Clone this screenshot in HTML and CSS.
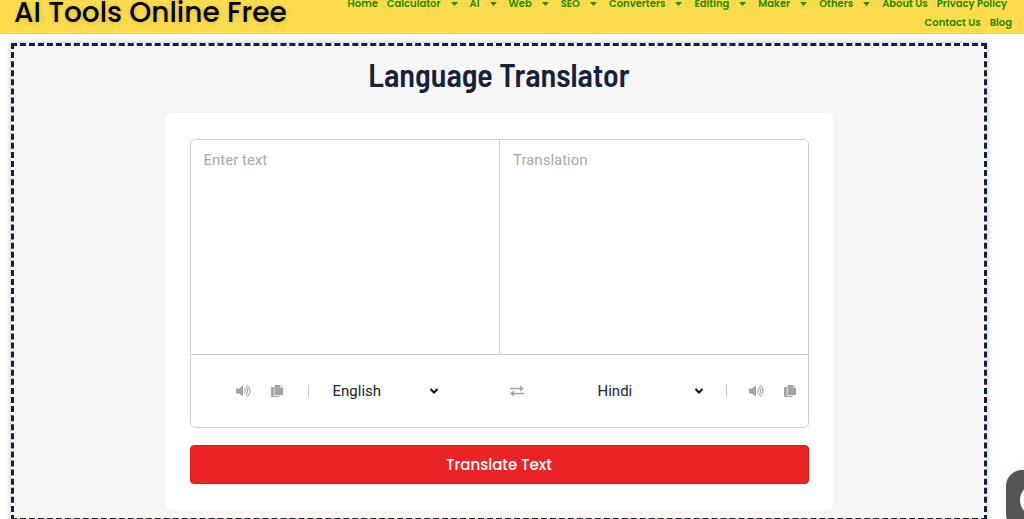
FILE: index.html
```html
<!DOCTYPE html>
<html lang="en">
<head>
<meta charset="utf-8">
<meta name="viewport" content="width=device-width, initial-scale=1">
<title>Language Translator</title>
<link rel="stylesheet" href="styles.css">
</head>
<body>
<svg class="sprite" aria-hidden="true">
  <symbol id="speaker" viewBox="0 0 15 14">
    <path fill="currentColor" d="M0 4.500h3L7 1.500v11L3 9.500H0z"/>
    <path fill="none" stroke="currentColor" stroke-width="1.100" stroke-linecap="round" d="M8.500 5.200q1.700 1.800 0 3.600M10 3.200q3.400 3.800 0 7.600M11.500 1.500q5 5.500 0 11"/>
  </symbol>
  <symbol id="copy" viewBox="0 0 13 14">
    <path fill="currentColor" d="M3.500 1H9v3h3v6.500a.5.5 0 0 1-.5.5H4a.5.5 0 0 1-.5-.5zM9.600 1L12 3.400H9.600zM0 3h2.800v8q0 .8.800.8H9V12q0 1-1 1H1q-1 0-1-1z"/>
  </symbol>
  <symbol id="swap" viewBox="0 0 16 14">
    <path fill="none" stroke="currentColor" stroke-width="1.600" d="M0 4.500h12M14 9.500H2"/>
    <path fill="currentColor" d="M10 1.500l4 3-4 3zM4 6.500l-4 3 4 3z"/>
  </symbol>
  <symbol id="chevron" viewBox="0 0 10 8">
    <path fill="none" stroke="currentColor" stroke-width="2" d="M1.500 2L5 5.500 8.500 2"/>
  </symbol>
  <symbol id="caret" viewBox="0 0 7 4">
    <path fill="currentColor" d="M0 0h7L3.500 4z"/>
  </symbol>
</svg>

<header class="site-header">
  <a class="brand" href="#">AI Tools Online Free</a>
  <nav class="nav">
    <div class="nav-row nav-main">
      <a href="#">Home</a>
      <a href="#">Calculator <svg class="caret"><use href="#caret"/></svg></a>
      <a href="#">AI <svg class="caret"><use href="#caret"/></svg></a>
      <a href="#">Web <svg class="caret"><use href="#caret"/></svg></a>
      <a href="#">SEO <svg class="caret"><use href="#caret"/></svg></a>
      <a href="#">Converters <svg class="caret"><use href="#caret"/></svg></a>
      <a href="#">Editing <svg class="caret"><use href="#caret"/></svg></a>
      <a href="#">Maker <svg class="caret"><use href="#caret"/></svg></a>
      <a href="#">Others <svg class="caret"><use href="#caret"/></svg></a>
      <a href="#">About Us</a>
      <a href="#">Privacy Policy</a>
    </div>
    <div class="nav-row">
      <a href="#">Contact Us</a>
      <a href="#">Blog</a>
    </div>
  </nav>
</header>

<main class="panel">
  <h1 class="title">Language Translator</h1>
  <form class="card">
    <div class="translator">
      <div class="texts">
        <textarea class="text" placeholder="Enter text" aria-label="Enter text"></textarea>
        <textarea class="text" placeholder="Translation" aria-label="Translation" readonly></textarea>
      </div>
      <div class="controls">
        <div class="group from">
          <div class="icons">
            <button class="icon" type="button" aria-label="Listen to text"><svg width="15" height="14"><use href="#speaker"/></svg></button>
            <button class="icon" type="button" aria-label="Copy text"><svg width="13" height="14"><use href="#copy"/></svg></button>
          </div>
          <span class="rule"></span>
          <div class="picker">
            <select aria-label="From language"><option>English</option><option>Hindi</option></select>
            <svg class="chevron"><use href="#chevron"/></svg>
          </div>
        </div>
        <button class="icon" type="button" aria-label="Swap languages"><svg width="16" height="14"><use href="#swap"/></svg></button>
        <div class="group to">
          <div class="picker">
            <select aria-label="To language"><option>Hindi</option><option>English</option></select>
            <svg class="chevron"><use href="#chevron"/></svg>
          </div>
          <span class="rule"></span>
          <div class="icons">
            <button class="icon" type="button" aria-label="Listen to translation"><svg width="15" height="14"><use href="#speaker"/></svg></button>
            <button class="icon" type="button" aria-label="Copy translation"><svg width="13" height="14"><use href="#copy"/></svg></button>
          </div>
        </div>
      </div>
    </div>
    <button class="submit" type="button">Translate Text</button>
  </form>
</main>

<button class="chat" type="button" aria-label="Open chat"><span class="chat-dot"></span></button>
</body>
</html>
```
FILE: styles.css
```css
* {
  box-sizing: border-box;
}

body {
  margin: 0;
  overflow: hidden;
  background: #fff;
  font-family: Poppins, Inter, sans-serif;
}

button {
  padding: 0;
  border: 0;
  cursor: pointer;
}

.sprite {
  position: absolute;
  width: 0;
  height: 0;
}

/* Header */
.site-header {
  display: flex;
  justify-content: space-between;
  align-items: center;
  margin-top: -12px;
  padding: 6px 12px 1px 14px;
  border-bottom: 1px solid #f5cd43;
  background: #fcdc4d;
}

.brand {
  color: #000;
  font-size: 28px;
  font-weight: 500;
  line-height: 36px;
  text-decoration: none;
  text-shadow: 1px 1px 5px rgb(0 0 0 / 15%);
  white-space: nowrap;
}

.nav-row {
  display: flex;
  justify-content: flex-end;
  gap: 9px;
}

.nav-main {
  margin-right: 5px;
}

.nav a {
  display: flex;
  align-items: center;
  gap: 10px;
  color: #1f8a05;
  font-size: 10px;
  font-weight: 600;
  line-height: 19px;
  text-decoration: none;
  white-space: nowrap;
}

.caret {
  width: 7px;
  height: 4px;
  margin-right: 3px;
}

/* Panel */
.panel {
  margin: 9px 37px 0 11px;
  padding: 8px 24px;
  border: 3px dashed #14213d;
  background: #f7f7f7;
  box-shadow: 0 0 6px rgb(0 0 0 / 25%);
}

.title {
  margin: 0 0 19px;
  color: #14213d;
  font-family: "Barlow Semi Condensed", "Roboto Condensed", "Liberation Sans Narrow", Roboto, sans-serif;
  font-size: 32px;
  font-weight: 600;
  line-height: 40px;
  text-align: center;
}

.card {
  max-width: 669px;
  margin: 0 auto;
  padding: 26px 25px;
  border-radius: 7px;
  background: #fff;
  box-shadow: 0 0 12px rgb(0 0 0 / 2%);
}

.translator {
  border: 1px solid #ccc;
  border-radius: 5px;
}

.texts {
  display: grid;
  grid-template-columns: 1fr 1fr;
  border-bottom: 1px solid #ccc;
}

.text {
  display: block;
  width: 100%;
  height: 214px;
  padding: 10px 13px;
  border: 0;
  outline: 0;
  background: none;
  color: #222;
  font: 15px/21px Roboto, sans-serif;
  resize: none;
}

.text + .text {
  border-left: 1px solid #ccc;
}

.text::placeholder {
  color: #aaa;
  opacity: 1;
}

.controls {
  display: flex;
  justify-content: space-between;
  align-items: center;
  padding: 24px 11px 24px 45px;
}

.group {
  display: flex;
  align-items: center;
  gap: 24px;
}

.to {
  gap: 22px;
}

.icons {
  display: flex;
  gap: 20px;
}

.icon {
  display: flex;
  background: none;
  color: #a3a3a3;
}

.rule {
  width: 1px;
  height: 12px;
  background: #c4c4c4;
}

.picker {
  display: grid;
  align-items: center;
  width: 106px;
}

.picker select,
.chevron {
  grid-area: 1 / 1;
}

.picker select {
  width: 100%;
  padding: 0;
  border: 0;
  appearance: none;
  background: none;
  color: #222;
  font: 15px/24px Roboto, sans-serif;
}

.chevron {
  justify-self: end;
  width: 10px;
  height: 8px;
  color: #111;
  pointer-events: none;
}

.submit {
  display: block;
  width: 100%;
  margin-top: 17px;
  border: 1px solid #e21717;
  border-radius: 4px;
  background: #ea2424;
  color: #fff;
  font: 500 15px/37px Poppins, Inter, sans-serif;
}

/* Floating chat launcher, partly off the edge */
.chat {
  position: fixed;
  right: -42px;
  bottom: -11px;
  display: grid;
  place-items: center;
  width: 60px;
  height: 60px;
  border-radius: 16px;
  background: #555;
  box-shadow: 0 0 12px rgb(0 0 0 / 8%);
}

.chat-dot {
  width: 32px;
  height: 32px;
  border-radius: 50%;
  background: #fff;
}
```
